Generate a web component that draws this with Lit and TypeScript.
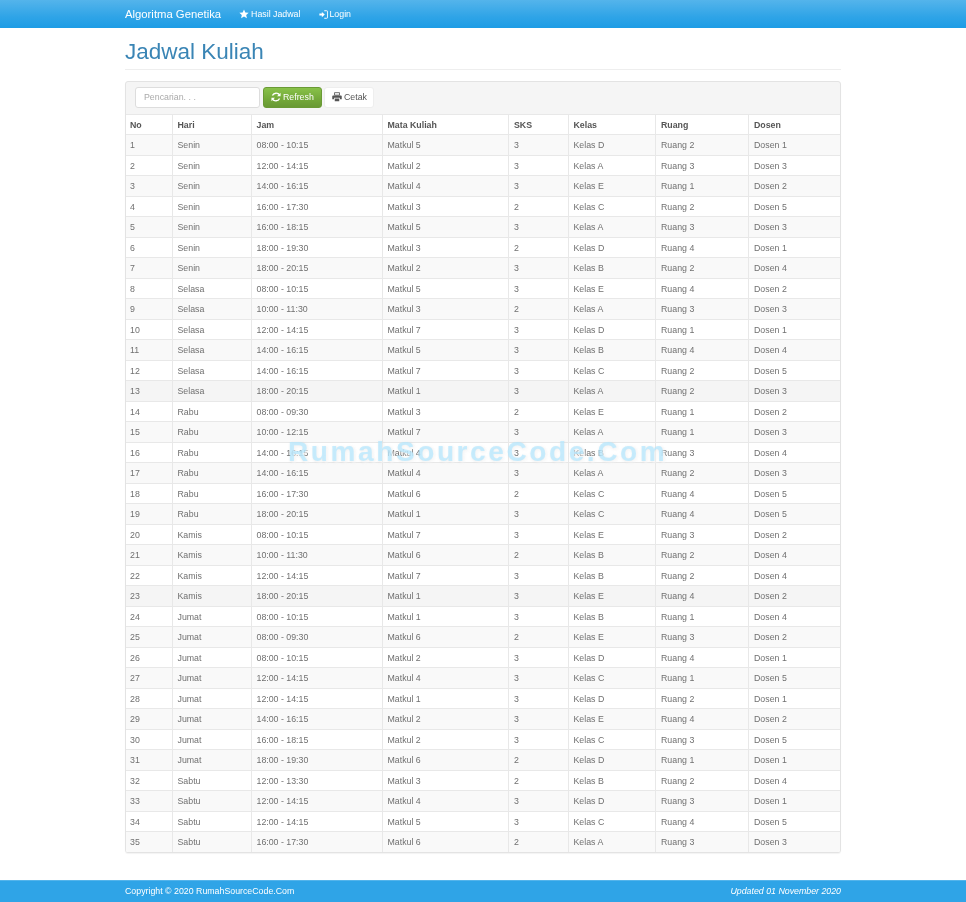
import { LitElement, html, css, svg } from "lit";
import { customElement } from "lit/decorators.js";

const RAW = `Senin|08:00 - 10:15|5|3|D|2|1
Senin|12:00 - 14:15|2|3|A|3|3
Senin|14:00 - 16:15|4|3|E|1|2
Senin|16:00 - 17:30|3|2|C|2|5
Senin|16:00 - 18:15|5|3|A|3|3
Senin|18:00 - 19:30|3|2|D|4|1
Senin|18:00 - 20:15|2|3|B|2|4
Selasa|08:00 - 10:15|5|3|E|4|2
Selasa|10:00 - 11:30|3|2|A|3|3
Selasa|12:00 - 14:15|7|3|D|1|1
Selasa|14:00 - 16:15|5|3|B|4|4
Selasa|14:00 - 16:15|7|3|C|2|5
Selasa|18:00 - 20:15|1|3|A|2|3
Rabu|08:00 - 09:30|3|2|E|1|2
Rabu|10:00 - 12:15|7|3|A|1|3
Rabu|14:00 - 16:15|4|3|B|3|4
Rabu|14:00 - 16:15|4|3|A|2|3
Rabu|16:00 - 17:30|6|2|C|4|5
Rabu|18:00 - 20:15|1|3|C|4|5
Kamis|08:00 - 10:15|7|3|E|3|2
Kamis|10:00 - 11:30|6|2|B|2|4
Kamis|12:00 - 14:15|7|3|B|2|4
Kamis|18:00 - 20:15|1|3|E|4|2
Jumat|08:00 - 10:15|1|3|B|1|4
Jumat|08:00 - 09:30|6|2|E|3|2
Jumat|08:00 - 10:15|2|3|D|4|1
Jumat|12:00 - 14:15|4|3|C|1|5
Jumat|12:00 - 14:15|1|3|D|2|1
Jumat|14:00 - 16:15|2|3|E|4|2
Jumat|16:00 - 18:15|2|3|C|3|5
Jumat|18:00 - 19:30|6|2|D|1|1
Sabtu|12:00 - 13:30|3|2|B|2|4
Sabtu|12:00 - 14:15|4|3|D|3|1
Sabtu|12:00 - 14:15|5|3|C|4|5
Sabtu|16:00 - 17:30|6|2|A|3|3`;

const ROWS = RAW.split("\n").map((l) => l.split("|"));
const WIDTHS = [46, 79, 131, 126, 60, 87, 93, 92];
const HEADS = ["No", "Hari", "Jam", "Mata Kuliah", "SKS", "Kelas", "Ruang", "Dosen"];

const star = svg`<path d="M6 .6l1.6 3.7 4 .3-3 2.6.9 3.9L6 9.1 2.5 11.1l.9-3.9-3-2.6 4-.3z" fill="currentColor"/>`;
const login = svg`<path d="M7 1h3.2A1.3 1.3 0 0 1 11.500 2.300v7.400A1.300 1.300 0 0 1 10.200 11H7" fill="none" stroke="currentColor" stroke-width="1.300"/><path d="M.5 4.600h3.300V2.500L7.800 6 3.800 9.500V7.400H.5z" fill="currentColor"/>`;
const refresh = svg`<path d="M10.400 3.700A5 5 0 0 0 1.700 4.200" fill="none" stroke="currentColor" stroke-width="1.700"/><path d="M11.500 .8v4.200H7.300z" fill="currentColor"/><path d="M1.600 8.300A5 5 0 0 0 10.300 7.800" fill="none" stroke="currentColor" stroke-width="1.700"/><path d="M.5 11.200V7h4.200z" fill="currentColor"/>`;
const printer = svg`<path d="M3 .8h6v3H3z" fill="none" stroke="currentColor" stroke-width="1"/><path d="M1.300 4.200h9.400a1 1 0 0 1 1 1v3.600H9.500V7h-7v1.800H.3V5.200a1 1 0 0 1 1-1z" fill="currentColor"/><path d="M3.300 7.800h5.400v3.200H3.300z" fill="currentColor"/>`;

@customElement("app-root")
export class AppRoot extends LitElement {
  static styles = css`
    :host {
      display: block;
      font-family: "Liberation Sans", Arial, sans-serif;
      color: #555;
      background: #fff;
      position: relative;
      filter: blur(0.45px);
    }
    .page {
      min-height: 902px;
      display: flex;
      flex-direction: column;
    }
    .nav {
      height: 28px;
      box-sizing: border-box;
      background: linear-gradient(#54b4eb, #2fa4e7 60%, #1d9ce5);
      color: #fff;
      padding-left: 125px;
      display: flex;
      align-items: center;
      font-size: 8.800px;
    }
    .brand {
      font-size: 11.300px;
      margin-right: 18px;
    }
    .nav-link {
      display: flex;
      align-items: center;
      gap: 2px;
      margin-right: 19px;
    }
    .nav-link.tight {
      gap: 1px;
    }
    .ic {
      display: block;
      flex: none;
    }
    main {
      flex: 1;
      padding: 0 125px;
    }
    .head {
      height: 42px;
      box-sizing: border-box;
      border-bottom: 1px solid #eee;
      margin-bottom: 11px;
      padding-top: 11px;
    }
    h1 {
      margin: 0;
      font-size: 22.500px;
      line-height: 26px;
      font-weight: 400;
      color: #3a85b5;
    }
    .panel {
      border: 1px solid #e3e3e3;
      border-radius: 3px;
      background: #f5f5f5;
      overflow: hidden;
      box-shadow: 0 1px 1px rgba(0, 0, 0, 0.05);
    }
    .toolbar {
      height: 31.750px;
      box-sizing: border-box;
      display: flex;
      align-items: center;
      padding: 0 9px 1px;
    }
    .search {
      width: 125px;
      height: 21px;
      box-sizing: border-box;
      border: 1px solid #ddd;
      border-radius: 3px;
      background: #fff;
      color: #aaa;
      font-size: 8.800px;
      line-height: 19px;
      padding-left: 8px;
      margin-right: 3px;
    }
    .btn {
      height: 21px;
      box-sizing: border-box;
      border-radius: 3px;
      display: flex;
      align-items: center;
      gap: 2px;
      font-size: 8.800px;
      padding: 0 7px;
      margin-right: 2px;
    }
    .green {
      width: 59px;
      background: linear-gradient(#88c149, #73a839 60%, #699934);
      border: 1px solid #6a9a35;
      color: #fff;
    }
    .white {
      width: 50px;
      background: #fff;
      border: 1px solid #eee;
      color: #555;
    }
    table {
      width: 100%;
      table-layout: fixed;
      border-collapse: collapse;
      font-size: 8.800px;
      background: #fff;
    }
    th,
    td {
      height: 20.500px;
      box-sizing: border-box;
      padding: 0 5px;
      text-align: left;
      border-top: 1px solid #e8e8e8;
      border-left: 1px solid #e8e8e8;
      white-space: nowrap;
      overflow: hidden;
    }
    th:first-child,
    td:first-child {
      border-left: 0;
      padding-left: 4px;
    }
    th:nth-child(5),
    td:nth-child(5),
    th:nth-child(n + 7),
    td:nth-child(n + 7) {
      padding-left: 5.500px;
    }
    th {
      color: #555;
      font-weight: 700;
    }
    td {
      color: #707070;
    }
    tbody tr:nth-child(odd) td {
      background: #f9f9f9;
    }
    tbody tr.hover td {
      background: #f5f5f5;
    }
    .foot {
      height: 22px;
      margin-top: 26px;
      box-sizing: border-box;
      background: #2fa4e7;
      border-top: 1px solid #54b4eb;
      color: #fff;
      font-size: 8.800px;
      padding: 0 125px 1px;
      display: flex;
      align-items: center;
      justify-content: space-between;
    }
    .foot em {
      font-style: italic;
    }
    .mark {
      position: absolute;
      left: 288px;
      top: 436px;
      font-size: 28px;
      line-height: 32px;
      font-weight: 700;
      letter-spacing: 2.600px;
      color: rgba(180, 232, 255, 0.72);
      text-shadow: 2px 2px 2px rgba(255, 255, 255, 0.55), 1px 1px 3px rgba(150, 150, 150, 0.25);
      white-space: nowrap;
      pointer-events: none;
    }
  `;

  private icon(body: unknown, size = 8) {
    return html`<svg class="ic" width=${size} height=${size} viewBox="0 0 12 12">${body}</svg>`;
  }

  render() {
    return html`
      <div class="page">
        <nav class="nav">
          <span class="brand">Algoritma Genetika</span>
          <span class="nav-link">${this.icon(star, 10)}Hasil Jadwal</span>
          <span class="nav-link tight">${this.icon(login, 9)}Login</span>
        </nav>
        <main>
          <div class="head"><h1>Jadwal Kuliah</h1></div>
          <section class="panel">
            <div class="toolbar">
              <div class="search">Pencarian. . .</div>
              <div class="btn green">${this.icon(refresh, 10)}Refresh</div>
              <div class="btn white">${this.icon(printer, 10)}Cetak</div>
            </div>
            <table>
              <colgroup>
                ${WIDTHS.map((w) => html`<col style="width:${w}px" />`)}
              </colgroup>
              <thead>
                <tr>${HEADS.map((h) => html`<th>${h}</th>`)}</tr>
              </thead>
              <tbody>
                ${ROWS.map(
                  (r, i) => html`<tr class=${i === 12 || i === 22 ? "hover" : ""}>
                    <td>${i + 1}</td>
                    <td>${r[0]}</td>
                    <td>${r[1]}</td>
                    <td>Matkul ${r[2]}</td>
                    <td>${r[3]}</td>
                    <td>Kelas ${r[4]}</td>
                    <td>Ruang ${r[5]}</td>
                    <td>Dosen ${r[6]}</td>
                  </tr>`
                )}
              </tbody>
            </table>
          </section>
        </main>
        <footer class="foot">
          <span>Copyright © 2020 RumahSourceCode.Com</span>
          <em>Updated 01 November 2020</em>
        </footer>
        <div class="mark">RumahSourceCode.Com</div>
      </div>
    `;
  }
}
